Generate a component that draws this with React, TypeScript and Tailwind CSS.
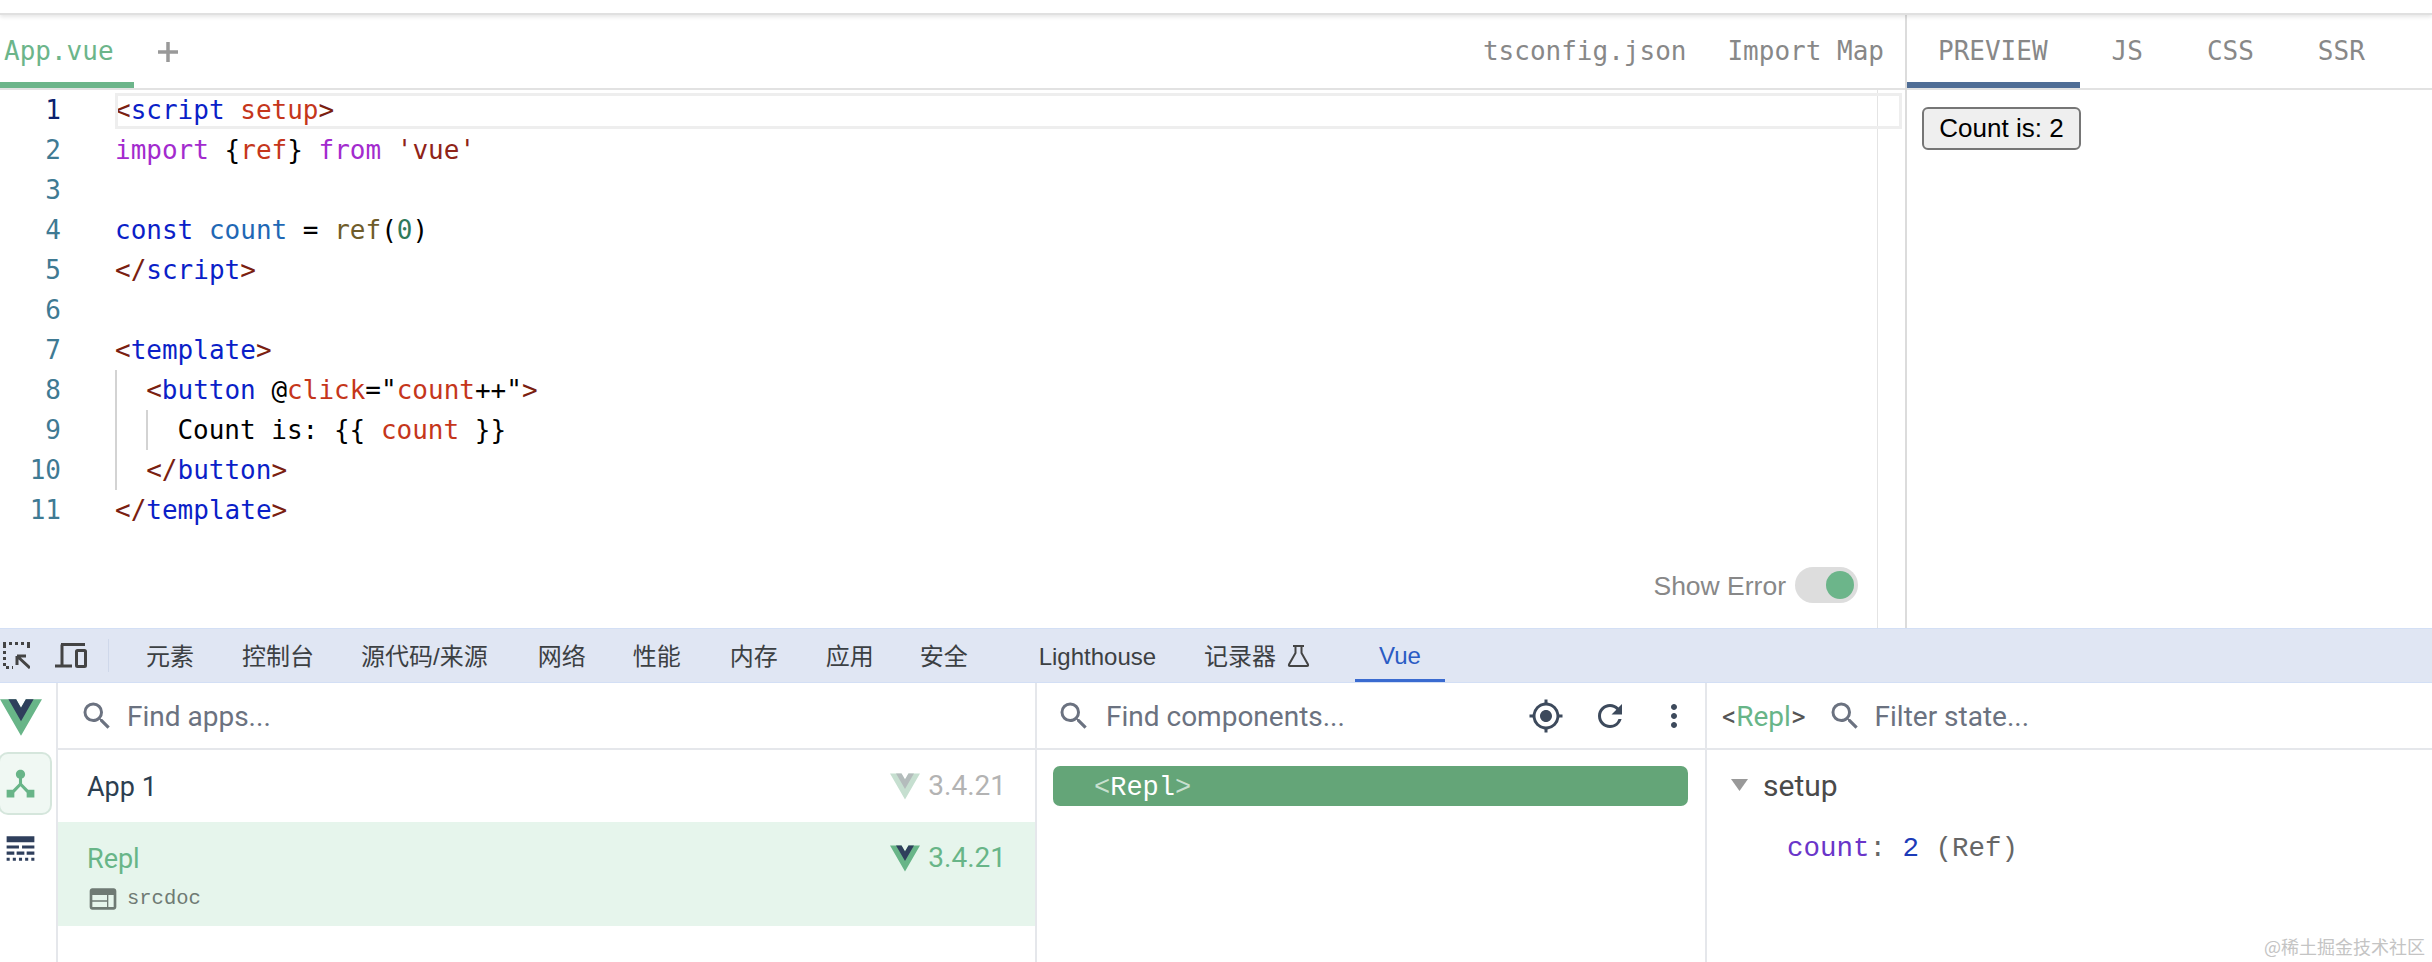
import { MdDeviceHub, MdGpsFixed, MdLineStyle, MdMoreVert, MdRefresh, MdSearch, MdWeb } from "react-icons/md";

type Token = [string, string];

const TAG = "text-[#7a2010]";
const NAME = "text-[#0b1fc8]";
const ATTR = "text-[#c5361b]";
const KEY = "text-[#a32bce]";
const STR = "text-[#8f2318]";
const VAR = "text-[#1f68b5]";
const FN = "text-[#6f5c2a]";
const NUM = "text-[#2f7a5a]";
const TXT = "text-black";

const LINES: { guides?: number; tokens: Token[] }[] = [
  { tokens: [["<", TAG], ["script", NAME], [" ", TXT], ["setup", ATTR], [">", TAG]] },
  { tokens: [["import", KEY], [" {", TXT], ["ref", ATTR], ["} ", TXT], ["from", KEY], [" ", TXT], ["'vue'", STR]] },
  { tokens: [] },
  { tokens: [["const", NAME], [" ", TXT], ["count", VAR], [" = ", TXT], ["ref", FN], ["(", TXT], ["0", NUM], [")", TXT]] },
  { tokens: [["</", TAG], ["script", NAME], [">", TAG]] },
  { tokens: [] },
  { tokens: [["<", TAG], ["template", NAME], [">", TAG]] },
  { guides: 1, tokens: [["<", TAG], ["button", NAME], [" @", TXT], ["click", ATTR], ['="', TXT], ["count", ATTR], ['++"', TXT], [">", TAG]] },
  { guides: 2, tokens: [["Count is: {{ ", TXT], ["count", ATTR], [" }}", TXT]] },
  { guides: 1, tokens: [["</", TAG], ["button", NAME], [">", TAG]] },
  { tokens: [["</", TAG], ["template", NAME], [">", TAG]] },
];

const DEV_TABS = [
  { label: "元素", ml: "ml-[37px]" },
  { label: "控制台", ml: "ml-[48px]" },
  { label: "源代码/来源", ml: "ml-[47px]" },
  { label: "网络", ml: "ml-[50px]" },
  { label: "性能", ml: "ml-[47px]" },
  { label: "内存", ml: "ml-[49px]" },
  { label: "应用", ml: "ml-[48px]" },
  { label: "安全", ml: "ml-[46px]" },
  { label: "Lighthouse", ml: "ml-[71px]" },
  { label: "记录器", ml: "ml-[48px]" },
];

function VueLogo({ className, faded }: { className: string; faded?: boolean }) {
  return (
    <svg viewBox="0 0 261.76 226.69" className={className}>
      <path d="M161.096.001l-30.225 52.351L100.647.001H-.005l130.877 226.688L261.749.001z" fill={faded ? "#c6dfd0" : "#68b588"} />
      <path d="M161.096.001l-30.225 52.351L100.647.001H52.346l78.526 136.01L209.398.001z" fill={faded ? "#b4bcbc" : "#2f3f5c"} />
    </svg>
  );
}

function InspectIcon() {
  return (
    <svg viewBox="0 0 27 27" className="ml-[3px] h-[27px] w-[27px] shrink-0" fill="none" stroke="#444" strokeWidth="3">
      <path d="M0 1.5H27M1.5 3V27M3 25.5H10M25.5 3V9" strokeDasharray="3 3" />
      <path d="M14 14L27 26M14 14h9M14 14v9" />
    </svg>
  );
}

function DeviceIcon() {
  return (
    <svg viewBox="0 0 32 25" className="ml-[25px] h-[25px] w-[32px] shrink-0" fill="none" stroke="#444" strokeWidth="3">
      <path d="M6 1.5H30M7 1.5V23M0 23H17" />
      <rect x="21.5" y="7.5" width="9" height="16" rx="1" />
    </svg>
  );
}

function FlaskIcon() {
  return (
    <svg viewBox="0 0 23 22" className="ml-[11px] h-[22px] w-[23px] shrink-0" fill="none" stroke="#444" strokeWidth="2">
      <path d="M6 1H17M8.5 1V8L2 19.5Q1.5 21 3 21H20Q21.5 21 21 19.5L14.5 8V1" />
    </svg>
  );
}

function Version({ faded }: { faded?: boolean }) {
  return (
    <div className={`flex items-center gap-[8px] text-[28px] ${faded ? "text-[#b3b3b3]" : "text-[#68b588]"}`}>
      <VueLogo className="h-[27px] w-[30px]" faded={faded} />
      <span>3.4.21</span>
    </div>
  );
}

export default function App() {
  return (
    <div className="relative flex h-[962px] w-[2432px] flex-col overflow-hidden bg-white font-['Roboto',sans-serif]">
      <div className="relative z-10 h-[15px] shrink-0 border-b-2 border-[#e0e0e0] shadow-[0_2px_4px_rgba(0,0,0,0.1)]" />

      {/* repl */}
      <div className="flex h-[613px] shrink-0 font-['DejaVu_Sans_Mono',monospace] text-[26px]">
        <div className="relative flex w-[1905px] shrink-0 flex-col">
          <div className="flex h-[75px] shrink-0 items-stretch border-b-2 border-[#e2e2e2] text-[#888]">
            <div className="flex w-[134px] items-center border-b-[6px] border-[#6cb58a] pl-[4px] pt-[6px] text-[#6cb58a]">App.vue</div>
            <div className="ml-[24px] flex items-center text-[#999]">
              <svg viewBox="0 0 20 20" className="h-[20px] w-[20px]" fill="none" stroke="currentColor" strokeWidth="3.5">
                <path d="M10 0V20M0 10H20" />
              </svg>
            </div>
            <div className="ml-auto flex items-center gap-[41px] pr-[21px]">
              <span>tsconfig.json</span>
              <span>Import Map</span>
            </div>
          </div>

          <div className="flex min-h-0 flex-1">
            <div className="w-[115px] shrink-0 pr-[54px] text-right text-[#3f7a93]">
              {LINES.map((_, i) => (
                <div key={i} className={`flex h-10 items-center justify-end ${i === 0 ? "text-[#0b216f]" : ""}`}>
                  {i + 1}
                </div>
              ))}
            </div>
            <div className="flex min-w-0 flex-1 flex-col border-r border-[#e4e4e4]">
              {LINES.map((line, i) => (
                <div key={i} className="flex h-10 items-center whitespace-pre">
                  {Array.from({ length: line.guides ?? 0 }).map((_, g) => (
                    <span key={g} className="h-10 w-[31.2px] shrink-0 border-l-2 border-[#d3d3d3]" />
                  ))}
                  {line.tokens.map(([text, color], t) => (
                    <span key={t} className={color}>
                      {text}
                    </span>
                  ))}
                </div>
              ))}
              <div className="mt-auto flex items-center justify-end gap-[9px] pb-[21px] pr-[19px] font-['Liberation_Sans',sans-serif] text-[26.5px] text-[#888]">
                <span className="pt-[5px]">Show Error</span>
                <div className="flex h-[36px] w-[63px] items-center justify-end rounded-full bg-[#dddddd] pr-[4px]">
                  <div className="h-[28px] w-[28px] rounded-full bg-[#6cb58a]" />
                </div>
              </div>
            </div>
            <div className="w-[27px] shrink-0" />
          </div>

          {/* current line highlight */}
          <div className="pointer-events-none absolute left-[115px] top-[78px] h-[36px] w-[1787px] border-[3px] border-[#eeeeee]" />
        </div>

        <div className="flex min-w-0 flex-1 flex-col border-l-2 border-[#dcdcdc]">
          <div className="flex h-[75px] shrink-0 items-stretch border-b-2 border-[#e2e2e2] text-[#888]">
            <div className="flex items-center border-b-[6px] border-[#4f6d96] pl-[31px] pr-[32px] pt-[6px]">PREVIEW</div>
            <div className="flex items-center px-[32px]">JS</div>
            <div className="flex items-center px-[32px]">CSS</div>
            <div className="flex items-center px-[32px]">SSR</div>
          </div>
          <div className="pl-[15px] pt-[17px]">
            <button className="flex h-[43px] w-[159px] items-center justify-center rounded-[6px] border-2 border-[#767676] bg-[#efefef] font-['Liberation_Sans',sans-serif] text-[26px] text-black">
              Count is: 2
            </button>
          </div>
        </div>
      </div>

      {/* devtools tab strip */}
      <div className="flex h-[55px] shrink-0 items-center border-y border-[#d3dff5] bg-[#e0e6f3] font-['Liberation_Sans','Noto_Sans_CJK_SC',sans-serif] text-[24px] leading-none text-[#3c4043]">
        <InspectIcon />
        <DeviceIcon />
        <div className="ml-[21px] h-[33px] w-px bg-[#cfd8ea]" />
        {DEV_TABS.map((tab) => (
          <span key={tab.label} className={`${tab.ml} mt-[3px] whitespace-nowrap`}>
            {tab.label}
          </span>
        ))}
        <FlaskIcon />
        <div className="ml-[45px] flex h-full items-center border-b-[3px] border-[#3a6bd0] px-[24px] pt-[3px] text-[#2a5bc4]">Vue</div>
      </div>

      {/* vue devtools */}
      <div className="flex min-h-0 flex-1 text-[28px]">
        <div className="flex w-[58px] shrink-0 flex-col border-r-2 border-[#e5e7eb]">
          <div className="flex h-[69px] shrink-0 items-center">
            <VueLogo className="h-[37px] w-[42px]" />
          </div>
          <div className="-ml-[2px] flex h-[63px] w-[54px] shrink-0 items-center rounded-[10px] border-2 border-[#d5e6dc] bg-[#f0f8f3] pl-[2px] text-[#68b588]">
            <MdDeviceHub size={37} />
          </div>
          <div className="mt-[15px] pl-[2px] text-[#2f3f5c]">
            <MdLineStyle size={37} />
          </div>
        </div>

        <div className="flex w-[979px] shrink-0 flex-col border-r-2 border-[#e5e7eb]">
          <div className="flex h-[67px] shrink-0 items-center gap-[12px] border-b-2 border-[#e5e7eb] pl-[21px] text-[#6b7280]">
            <MdSearch size={36} />
            <span className="pt-[3px]">Find apps...</span>
          </div>
          <div className="flex h-[72px] shrink-0 items-center justify-between pl-[29px] pr-[29px] text-[27px] text-[#2c3e50]">
            <span className="pt-[3px]">App 1</span>
            <Version faded />
          </div>
          <div className="flex h-[104px] shrink-0 flex-col bg-[#e6f5ec] pl-[29px] pr-[29px] pt-[17px] text-[27px] text-[#68b588]">
            <div className="flex h-[38px] items-center justify-between">
              <span className="pt-[3px]">Repl</span>
              <Version />
            </div>
            <div className="mt-[6px] flex items-center gap-[8px] font-['Liberation_Mono',monospace] text-[20.5px] text-[#6f7a74]">
              <MdWeb size={32} />
              <span>srcdoc</span>
            </div>
          </div>
        </div>

        <div className="flex w-[670px] shrink-0 flex-col border-r-2 border-[#e5e7eb]">
          <div className="flex h-[67px] shrink-0 items-center border-b-2 border-[#e5e7eb] pl-[19px] pr-[13px] text-[#6b7280]">
            <MdSearch size={36} />
            <span className="ml-[14px] pt-[3px]">Find components...</span>
            <div className="ml-auto flex items-center gap-[28px] text-[#3d4a5c]">
              <MdGpsFixed size={36} />
              <MdRefresh size={36} />
              <MdMoreVert size={36} />
            </div>
          </div>
          <div className="pl-[16px] pr-[17px] pt-[16px]">
            <div className="flex h-[40px] items-center rounded-[7px] bg-[#64a578] pl-[41px] pt-[5px] font-['Liberation_Mono',monospace] text-[27px] text-white">
              <span className="text-[#c8e0cf]">&lt;</span>
              <span>Repl</span>
              <span className="text-[#c8e0cf]">&gt;</span>
            </div>
          </div>
        </div>

        <div className="flex min-w-0 flex-1 flex-col">
          <div className="flex h-[67px] shrink-0 items-center border-b-2 border-[#e5e7eb] pl-[15px] text-[#6b7280]">
            <span className="pt-[3px] text-[#555]">
              &lt;<span className="text-[#68b588]">Repl</span>&gt;
            </span>
            <span className="ml-[21px]">
              <MdSearch size={36} />
            </span>
            <span className="ml-[12px] pt-[3px]">Filter state...</span>
          </div>
          <div className="flex h-[70px] items-center pl-[24px] text-[30px] text-[#4a4a4a]">
            <svg viewBox="0 0 17 12" className="h-[12px] w-[17px]">
              <polygon points="0,0 17,0 8.5,12" fill="#999" />
            </svg>
            <span className="ml-[15px]">setup</span>
          </div>
          <div className="ml-[80px] mt-[8px] flex items-center whitespace-pre font-['Liberation_Mono',monospace] text-[27.5px] text-[#666]">
            <span className="text-[#6a35c9]">count</span>
            <span>: </span>
            <span className="text-[#1c3bb8]">2</span>
            <span> (Ref)</span>
          </div>
        </div>
      </div>

      <div className="absolute bottom-[7px] right-[7px] font-['Noto_Sans_CJK_SC',sans-serif] text-[18px] leading-none text-[#c4c4c4]">
        @稀土掘金技术社区
      </div>
    </div>
  );
}
